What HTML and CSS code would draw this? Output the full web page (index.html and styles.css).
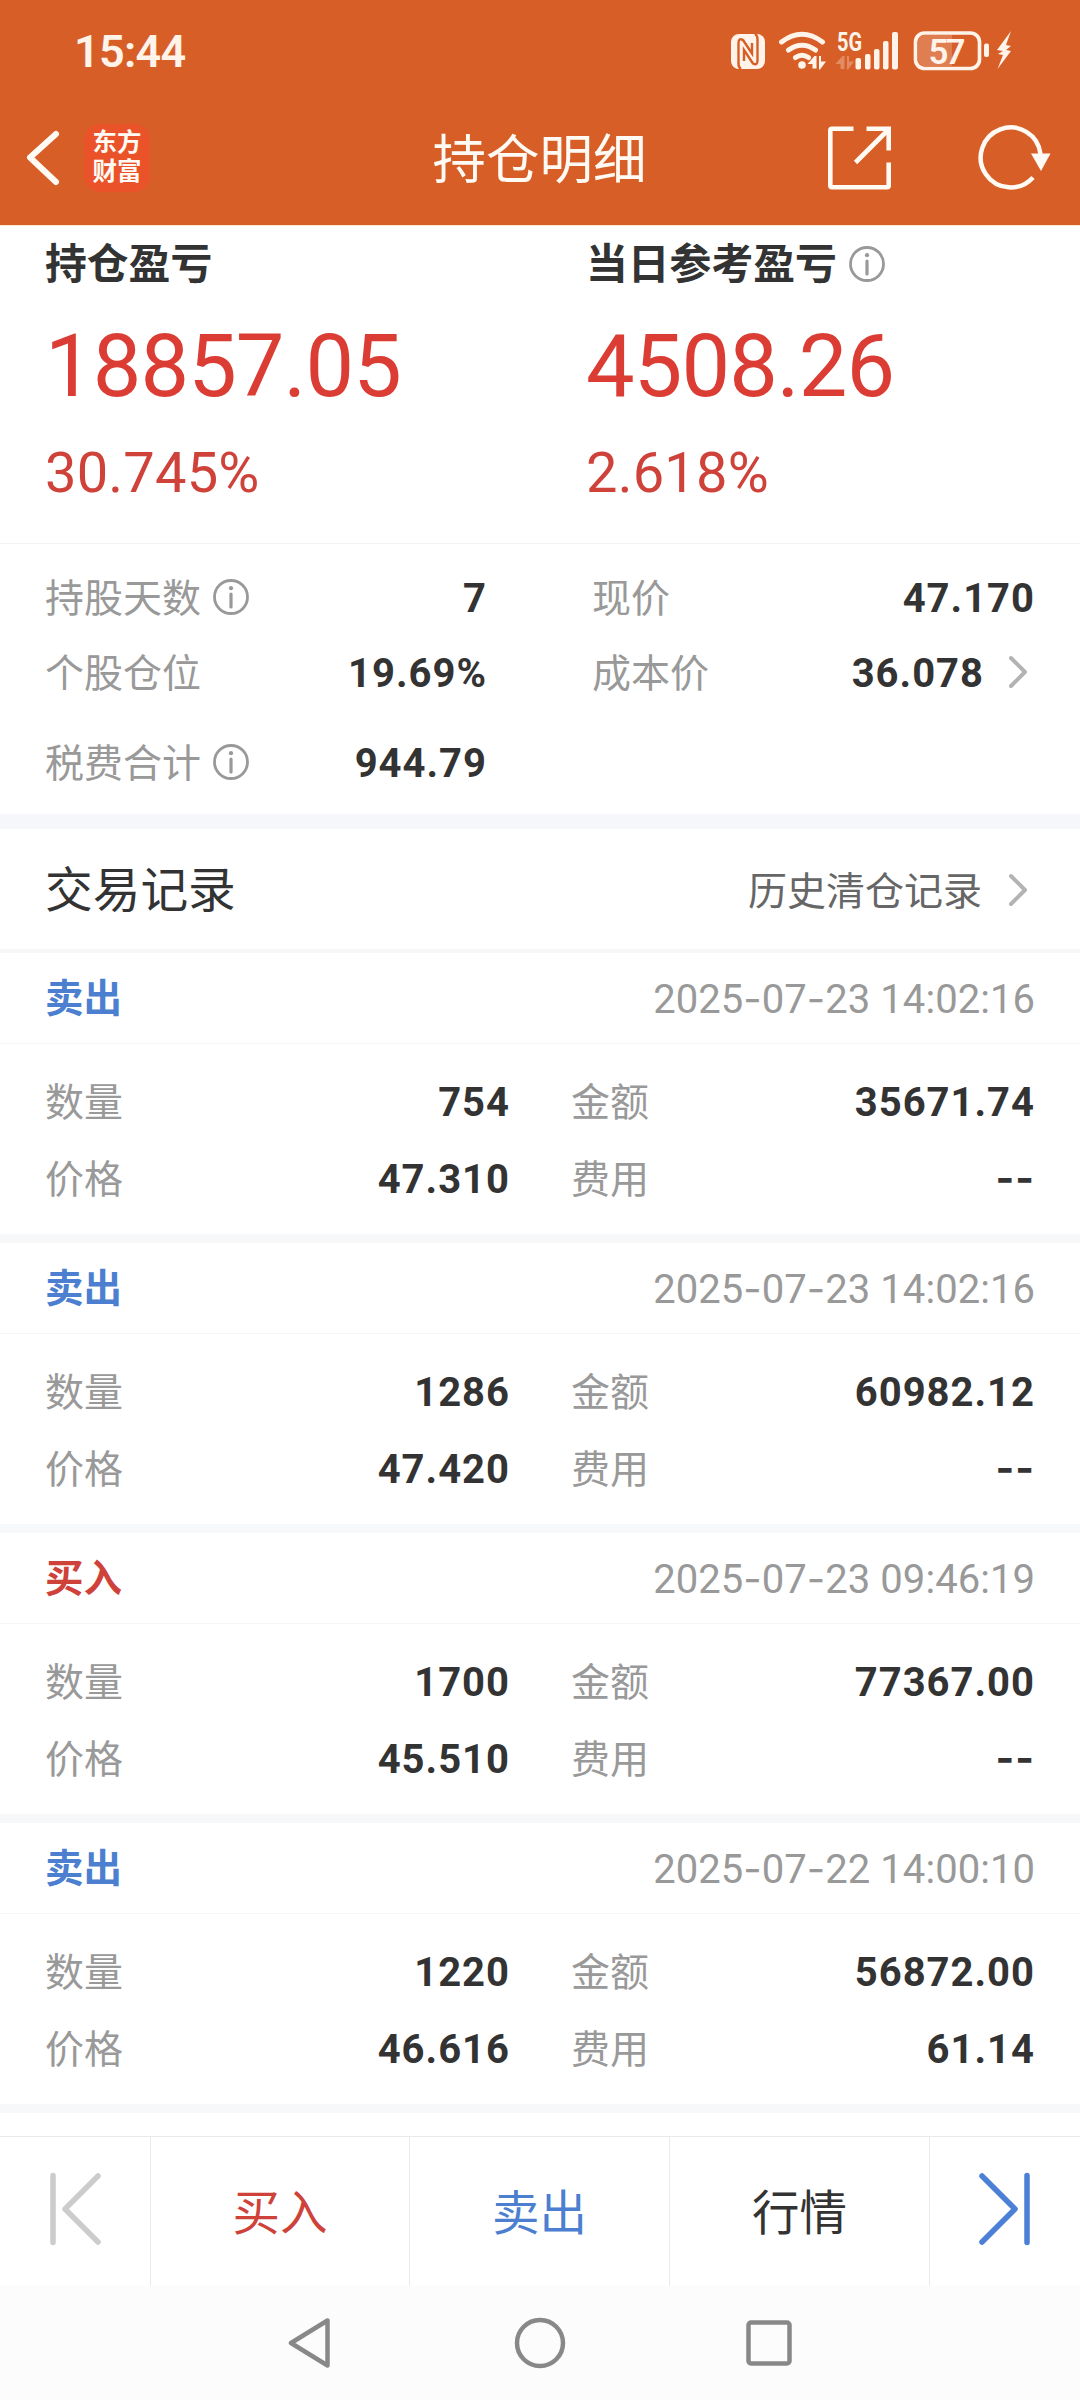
FILE: index.html
```html
<!DOCTYPE html>
<html lang="zh-CN">
<head>
<meta charset="utf-8">
<title>持仓明细</title>
<link rel="stylesheet" href="styles.css">
</head>
<body>
<svg class="defs" width="0" height="0">
  <symbol id="info" viewBox="0 0 36 36"><circle cx="18" cy="18" r="16.5" fill="none" stroke="#999" stroke-width="2.8"/><circle cx="18" cy="9.2" r="2.1" fill="#999"/><path d="M18 15v13" stroke="#999" stroke-width="3.2" stroke-linecap="round"/></symbol>
  <symbol id="more" viewBox="0 0 20 34"><path d="M3 3l14 14L3 31" fill="none" stroke="#b3b3b3" stroke-width="4" stroke-linecap="round" stroke-linejoin="round"/></symbol>
</svg>
<header class="top">
  <div class="status">
    <span class="clock">15:44</span>
    <svg class="status-icons" width="284" height="44" viewBox="729 28 284 44">
      <g fill="#fff3ea">
        <rect x="731" y="34" width="34" height="35" rx="8"/>
        <path d="M741 69q-2.500-1.500-2.500-5V43q0-5.500 4.500-3l9 13.500V43" fill="none" stroke="#d75f27" stroke-width="2.400"/>
        <path d="M755 34q2.500 1.500 2.500 5v21.500q0 5.500-4.500 3l-9-13.500v11" fill="none" stroke="#d75f27" stroke-width="2.400"/>
        <g fill="none" stroke="#fff3ea" stroke-width="5" stroke-linecap="round">
          <path d="M781.500 42q20.500-15.500 41 0"/><path d="M788.500 50q13.500-9.500 27 0"/><path d="M795.500 57.500q6.500-4.500 13 0"/>
        </g>
        <circle cx="802" cy="65" r="3.800"/>
        <path d="M807.500 64l7-8h2v12.500h-4v-4.500zM819 56h2v5.500h5l-6 8h-1z"/>
        <path opacity=".3" d="M835.500 64l7-8h2v13h-4v-5zM847 56h2v5.500h5l-6 8h-1z"/>
        <rect x="855.500" y="58" width="5.500" height="11.500" rx="2"/><rect x="865" y="54" width="5.500" height="15.500" rx="2"/><rect x="874" y="49" width="5.500" height="20.500" rx="2"/><rect x="883" y="41" width="5.500" height="28.500" rx="2"/><rect x="892" y="32" width="6" height="37.500" rx="2"/>
        <path d="M925 35h27v31h-27q-7 0-7-7V42q0-7 7-7z" opacity=".22"/>
        <rect x="915.500" y="33" width="64" height="35.500" rx="9" fill="none" stroke="#fff3ea" stroke-width="3.600"/>
        <rect x="984" y="43.500" width="5" height="13.500" rx="2"/>
        <path d="M1011 31l-14 19 6 1-5 3 5 1-5.500 14L1011 51l-5-1 5-4-5-1z"/>
        <text class="net" x="837" y="51" textLength="25" lengthAdjust="spacingAndGlyphs">5G</text>
        <text class="level" x="928.500" y="63.500" textLength="37">57</text>
      </g>
    </svg>
  </div>
  <div class="titlebar">
    <div class="nav-left">
      <svg width="36" height="58" viewBox="25 129 36 58"><path d="M56 134L30 157.500 56 182" fill="none" stroke="#fffaf4" stroke-width="6" stroke-linecap="round" stroke-linejoin="round"/></svg>
      <div class="logo">东方<br>财富</div>
    </div>
    <h1>持仓明细</h1>
    <div class="nav-right">
      <svg width="66" height="66" viewBox="826 124.500 66 66" fill="none" stroke="#fffaf4" stroke-width="4.600"><path d="M853.500 128.300H832q-1.700 0-1.700 1.700v55q0 1.700 1.700 1.700h55q1.700 0 1.700-1.700v-23M866.500 128.300h22.200V150M855.500 162l33-33"/></svg>
      <svg width="76" height="68" viewBox="976 124 76 68"><path d="M1040.500 154A30 30 0 1 0 1033 177.500" fill="none" stroke="#fffaf4" stroke-width="4.500"/><path d="M1031 153.500h19.500L1041 171z" fill="#fffaf4"/></svg>
    </div>
  </div>
</header>
<main>
  <section class="summary">
    <div class="profit"><h2>持仓盈亏</h2><p class="amount">18857.05</p><p class="rate">30.745%</p></div>
    <div class="profit"><h2>当日参考盈亏<svg class="info"><use href="#info"/></svg></h2><p class="amount">4508.26</p><p class="rate">2.618%</p></div>
  </section>
  <section class="facts">
    <dl><dt>持股天数<svg class="info"><use href="#info"/></svg></dt><dd>7</dd></dl>
    <dl><dt>现价</dt><dd>47.170</dd></dl>
    <dl><dt>个股仓位</dt><dd>19.69%</dd></dl>
    <dl><dt>成本价</dt><dd>36.078<svg class="more"><use href="#more"/></svg></dd></dl>
    <dl><dt>税费合计<svg class="info"><use href="#info"/></svg></dt><dd>944.79</dd></dl>
  </section>
  <section class="list-head"><h3>交易记录</h3><a>历史清仓记录<svg class="more"><use href="#more"/></svg></a></section>
  <article class="record">
    <header><b class="sell">卖出</b><time>2025<i>-</i>07<i>-</i>23 14:02:16</time></header>
    <div class="cells"><dl><dt>数量</dt><dd>754</dd></dl><dl><dt>金额</dt><dd>35671.74</dd></dl><dl><dt>价格</dt><dd>47.310</dd></dl><dl><dt>费用</dt><dd><i>--</i></dd></dl></div>
  </article>
  <article class="record">
    <header><b class="sell">卖出</b><time>2025<i>-</i>07<i>-</i>23 14:02:16</time></header>
    <div class="cells"><dl><dt>数量</dt><dd>1286</dd></dl><dl><dt>金额</dt><dd>60982.12</dd></dl><dl><dt>价格</dt><dd>47.420</dd></dl><dl><dt>费用</dt><dd><i>--</i></dd></dl></div>
  </article>
  <article class="record">
    <header><b class="buy">买入</b><time>2025<i>-</i>07<i>-</i>23 09:46:19</time></header>
    <div class="cells"><dl><dt>数量</dt><dd>1700</dd></dl><dl><dt>金额</dt><dd>77367.00</dd></dl><dl><dt>价格</dt><dd>45.510</dd></dl><dl><dt>费用</dt><dd><i>--</i></dd></dl></div>
  </article>
  <article class="record">
    <header><b class="sell">卖出</b><time>2025<i>-</i>07<i>-</i>22 14:00:10</time></header>
    <div class="cells"><dl><dt>数量</dt><dd>1220</dd></dl><dl><dt>金额</dt><dd>56872.00</dd></dl><dl><dt>价格</dt><dd>46.616</dd></dl><dl><dt>费用</dt><dd>61.14</dd></dl></div>
  </article>
</main>
<nav class="actions">
  <span><svg width="52" height="76" viewBox="0 0 52 76" fill="none" stroke="#ccc" stroke-width="5.500" stroke-linecap="round" stroke-linejoin="round"><path d="M4 4.500v67M49 5L16 38l33 33"/></svg></span>
  <span class="buy">买入</span>
  <span class="sell">卖出</span>
  <span>行情</span>
  <span><svg width="52" height="76" viewBox="0 0 52 76" fill="none" stroke="#4c7fd6" stroke-width="5.500" stroke-linecap="round" stroke-linejoin="round"><path d="M48 4.500v67M3 5l33 33L3 71"/></svg></span>
</nav>
<footer class="system">
  <svg width="46" height="52" viewBox="0 0 46 52"><path d="M39.500 3.500v45L3 26z" fill="none" stroke="#888" stroke-width="4.500" stroke-linejoin="round"/></svg>
  <svg width="52" height="52" viewBox="0 0 52 52"><circle cx="26" cy="26" r="23" fill="none" stroke="#888" stroke-width="4.500"/></svg>
  <svg width="46" height="46" viewBox="0 0 46 46"><rect x="2.500" y="2.500" width="41" height="41" rx="2.500" fill="none" stroke="#888" stroke-width="4.500"/></svg>
</footer>
</body>
</html>
```
FILE: styles.css
```css
* { box-sizing: border-box; margin: 0; padding: 0; }
body {
  width: 1080px; height: 2400px; overflow: hidden;
  display: flex; flex-direction: column;
  background: #fff; color: #333;
  font-family: Roboto, "Noto Sans CJK SC", sans-serif;
}
svg { display: block; flex: none; }
.defs { position: absolute; }
i { font-style: normal; }

.top { height: 226px; background: #d75f27; color: #fffaf4; border-bottom: 1px solid #ffe8d6; flex: none; }
.status { height: 100px; padding: 0 67px 0 74px; display: flex; justify-content: space-between; align-items: center; }
.clock { font-size: 45px; font-weight: 600; line-height: 50px; letter-spacing: -0.7px; color: #fff3ea; padding-top: 3px; }
.net { font: 700 25px Roboto, sans-serif; }
.level { font: 600 35px Roboto, sans-serif; }
.titlebar { height: 116px; padding: 0 28px 0 25px; display: grid; grid-template-columns: 1fr auto 1fr; align-items: center; }
.nav-left { display: flex; align-items: center; gap: 23px; }
.logo { width: 66px; height: 68px; padding-top: 4px; border-radius: 16px; background: #ea5329; font-size: 24.500px; font-weight: 700; line-height: 29px; text-align: center; }
h1 { font-size: 53.500px; font-weight: 400; line-height: 60px; padding: 6px 0 0 2px; }
.nav-right { display: flex; align-items: center; justify-content: flex-end; gap: 84px; }

.summary { height: 317px; padding: 12px 45px 0; display: grid; grid-template-columns: 541px 1fr; }
h2 { height: 54px; display: flex; align-items: center; gap: 12px; font-size: 41.800px; line-height: 52px; font-weight: 700; }
.info { width: 36px; height: 36px; }
h2 .info { margin-top: -3px; }
.amount { margin-top: 21px; color: #db3d34; font-size: 86.500px; line-height: 108px; letter-spacing: -0.9px; }
.rate { margin-top: 24px; color: #cf423a; font-size: 56px; line-height: 56px; letter-spacing: 0.2px; }

.facts { height: 286px; padding: 16px 45px 0 45px; border-top: 1px solid #f3f3f3; border-bottom: 15px solid #f6f7fa; display: grid; grid-template-columns: 442px 443px; grid-template-rows: 75px 75px 105px; column-gap: 105px; }
dl { display: flex; justify-content: space-between; align-items: center; }
dt { display: flex; align-items: center; gap: 12px; font-size: 39px; line-height: 50px; color: #999; padding-top: 2px; }
dt .info { margin-top: -4px; }
dd { display: flex; align-items: center; font-size: 40px; line-height: 50px; font-weight: 700; letter-spacing: 1px; padding-top: 2px; }
.more { width: 20px; height: 34px; }
dd .more { margin: -4px 7px 0 24px; }

.list-head { height: 124px; padding: 0 52px 0 45px; border-bottom: 4px solid #f7f7f8; display: flex; justify-content: space-between; align-items: center; }
h3 { font-size: 47.700px; font-weight: 400; line-height: 60px; padding-top: 3px; }
.list-head a { display: flex; align-items: center; gap: 26px; padding-top: 6px; color: #666; font-size: 39px; line-height: 50px; }
.list-head .more { margin-top: -4px; }

.record { height: 290px; border-bottom: 9px solid #f6f8fa; }
.record header { height: 91px; padding: 2px 45px 0; border-bottom: 1px solid #f5f5f5; display: flex; justify-content: space-between; align-items: center; }
.record b { font-size: 38.500px; line-height: 50px; }
.record time { font-size: 40px; line-height: 50px; color: #999; letter-spacing: 0.05px; }
.cells { padding: 19px 45px 0 45px; display: grid; grid-template-columns: 465px 464px; column-gap: 61px; grid-auto-rows: 77px; }
time i, dd i { font-family: Inter, sans-serif; }
dd i { margin-top: -3px; }
.buy { color: #cf423a; }
.sell { color: #4c7fd0; }

main { height: 1910px; overflow: hidden; flex: none; }
.actions { height: 150px; border-top: 1px solid #eaeaea; display: grid; grid-template-columns: 151px 259px 260px 260px 150px; background: #fff; font-size: 47.500px; flex: none; }
.actions span { display: flex; align-items: center; justify-content: center; padding-bottom: 5px; border-right: 1px solid #eaeaea; }
.actions span:last-child { border-right: 0; }
.system { height: 114px; background: #fcfcfc; display: flex; justify-content: center; align-items: center; gap: 180px; flex: none; }
```
